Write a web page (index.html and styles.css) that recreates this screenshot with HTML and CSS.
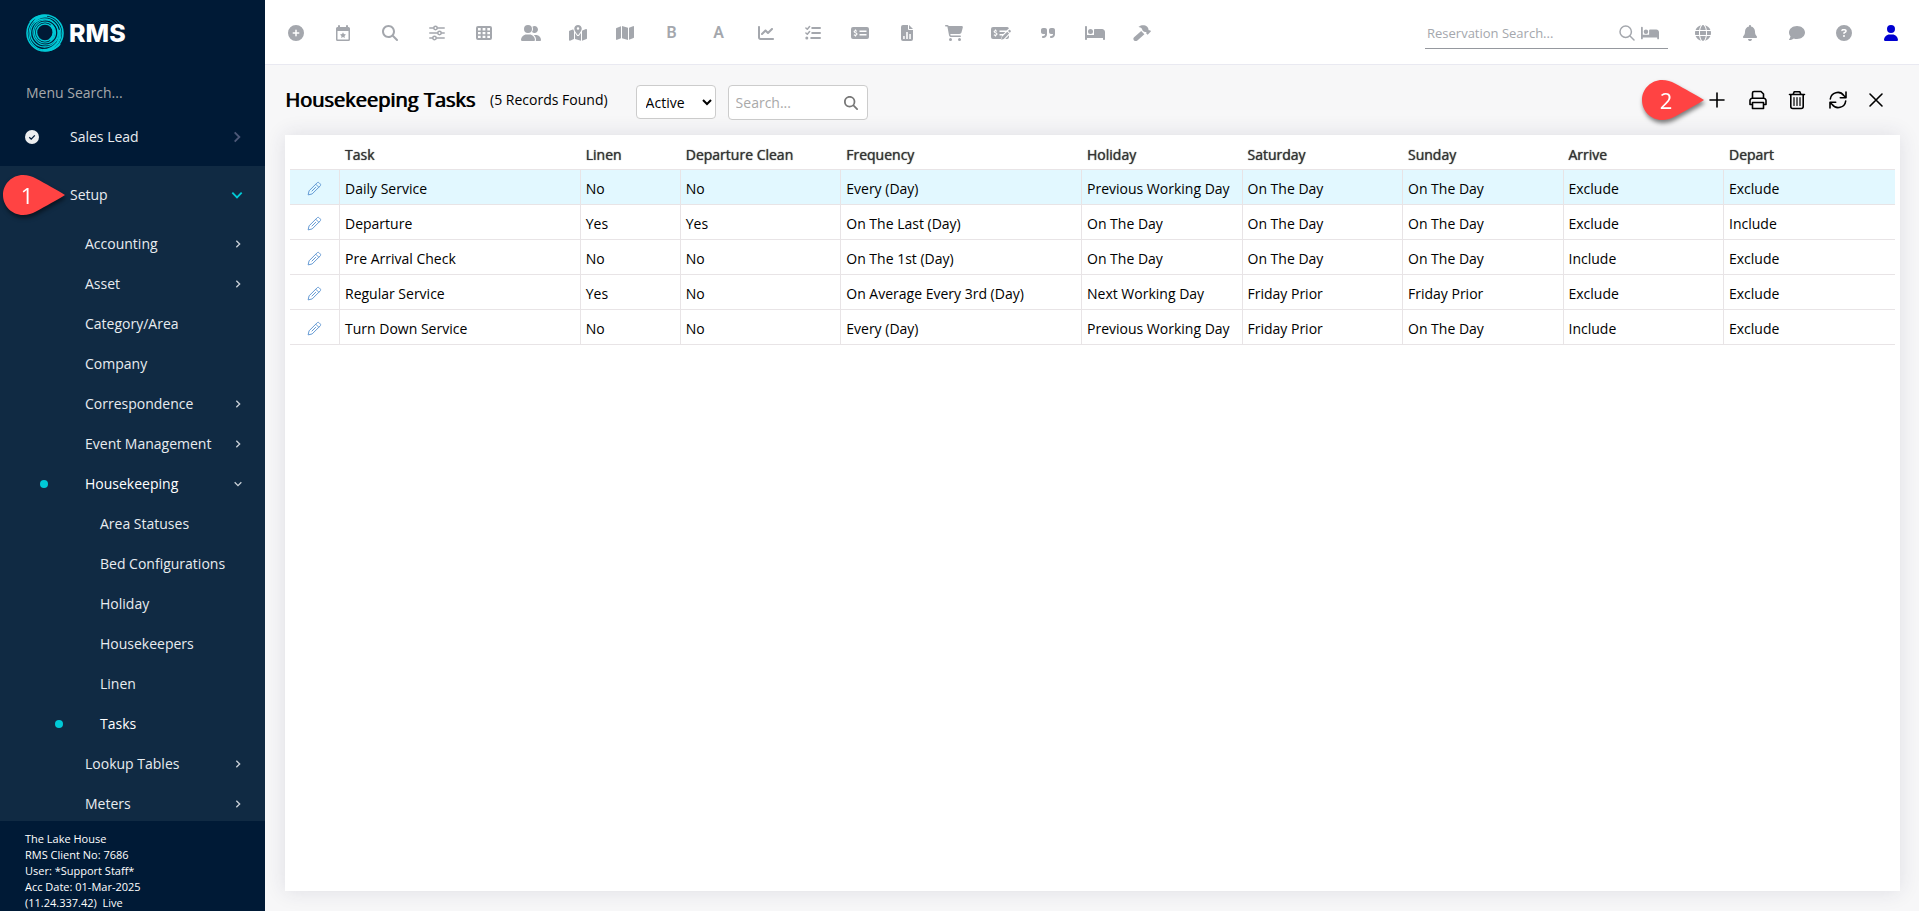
FILE: index.html
```html
<!DOCTYPE html>
<html lang="en">
<head>
<meta charset="utf-8">
<meta name="viewport" content="width=device-width, initial-scale=1">
<title>Housekeeping Tasks</title>
<link rel="stylesheet" href="styles.css">
</head>
<body>
<svg class="defs" aria-hidden="true">
  <symbol id="i-chevron" viewBox="0 0 12 12"><path d="M4 2l4 4-4 4" fill="none" stroke="currentColor" stroke-width="1.6"/></symbol>
  <symbol id="i-pencil" viewBox="0 0 16 16"><path d="M1.200 14.800l1-4.300L10.800 1.900c.6-.6 1.500-.6 2.100 0l1.200 1.200c.6.6.6 1.500 0 2.100L5.500 13.800zM9.300 3.400l3.300 3.300M5 11l4.500-4.500" fill="none" stroke="currentColor"/></symbol>
  <symbol id="i-search" viewBox="0 0 512 512"><path d="M416 208c0 45.900-14.900 88.300-40 122.700L502.600 457.400c12.500 12.500 12.500 32.800 0 45.300s-32.800 12.500-45.300 0L330.700 376c-34.400 25.200-76.800 40-122.700 40C93.100 416 0 322.900 0 208S93.100 0 208 0S416 93.100 416 208zM208 352a144 144 0 1 0 0-288 144 144 0 1 0 0 288z"/></symbol>
  <symbol id="i-bed" viewBox="0 0 640 512"><path d="M32 32c17.700 0 32 14.300 32 32V320H288V160c0-17.700 14.300-32 32-32H544c53 0 96 43 96 96V448c0 17.700-14.300 32-32 32s-32-14.300-32-32V416H64v32c0 17.700-14.300 32-32 32s-32-14.300-32-32V64C0 46.300 14.300 32 32 32zm144 96a80 80 0 1 1 0 160 80 80 0 1 1 0-160z"/></symbol>
  <symbol id="i-callout" viewBox="0 0 62 40"><path d="M20 0C9 0 0 9 0 20s9 20 20 20c5 0 9-1.500 13-3.500C43 31 54 25 62 20 54 15 43 9 33 3.500 29 1.500 25 0 20 0z"/></symbol>
</svg>
<div class="app">
  <aside class="sidebar">
    <a class="logo" href="#" aria-label="RMS home">
      <svg class="logo-mark" viewBox="0 0 38 38" fill="none" stroke="#00c9d6" aria-hidden="true">
        <circle cx="19" cy="19" r="18" stroke-width="1.600"/>
        <ellipse cx="19" cy="19.500" rx="16" ry="16.500" stroke-width="1.200"/>
        <circle cx="18.500" cy="19" r="14" stroke-width="1.300"/>
        <circle cx="19.500" cy="18.500" r="12.500" stroke-width="1.200"/>
        <circle cx="19" cy="18.500" r="10.500" stroke-width="1.200"/>
        <circle cx="19" cy="18.500" r="8.500" stroke-width="1.500"/>
        <path d="M4 8C8 3 14 1 21 2c-6 0-10 2-13 6M34 30c-4 5-10 7-17 6 6 0 10-2 14-7 3-4 3-9 2-13" stroke-width="2"/>
        <path d="M25 11c4 4 4 11-1 15" stroke-width="2.500"/>
      </svg>
      <span class="logo-text">RMS</span>
    </a>
    <input class="menu-search" type="text" placeholder="Menu Search..." aria-label="Menu search">
    <nav class="menu" aria-label="Main menu">
      <a class="menu-top" href="#">
        <svg class="menu-icon" viewBox="0 0 14 14" aria-hidden="true"><circle cx="7" cy="7" r="7" fill="#eceef0"/><path d="M4.300 7.200l1.900 1.900 3.600-3.700" fill="none" stroke="#001a36" stroke-width="1.300"/></svg>
        <span>Sales Lead</span><svg class="chev dim" aria-hidden="true"><use href="#i-chevron"/></svg>
      </a>
      <div class="menu-section">
        <a class="menu-top setup" href="#"><span>Setup</span><svg class="chev open cyan" aria-hidden="true"><use href="#i-chevron"/></svg>
          <span class="callout callout-one"><svg class="callout-shape" aria-hidden="true"><use href="#i-callout"/></svg><span class="callout-number">1</span></span>
        </a>
        <a class="item" href="#"><span>Accounting</span><svg class="chev small" aria-hidden="true"><use href="#i-chevron"/></svg></a>
        <a class="item" href="#"><span>Asset</span><svg class="chev small" aria-hidden="true"><use href="#i-chevron"/></svg></a>
        <a class="item" href="#"><span>Category/Area</span></a>
        <a class="item" href="#"><span>Company</span></a>
        <a class="item" href="#"><span>Correspondence</span><svg class="chev small" aria-hidden="true"><use href="#i-chevron"/></svg></a>
        <a class="item" href="#"><span>Event Management</span><svg class="chev small" aria-hidden="true"><use href="#i-chevron"/></svg></a>
        <a class="item current" href="#"><span>Housekeeping</span><svg class="chev small open" aria-hidden="true"><use href="#i-chevron"/></svg></a>
        <a class="item sub" href="#"><span>Area Statuses</span></a>
        <a class="item sub" href="#"><span>Bed Configurations</span></a>
        <a class="item sub" href="#"><span>Holiday</span></a>
        <a class="item sub" href="#"><span>Housekeepers</span></a>
        <a class="item sub" href="#"><span>Linen</span></a>
        <a class="item sub current" href="#"><span>Tasks</span></a>
        <a class="item" href="#"><span>Lookup Tables</span><svg class="chev small" aria-hidden="true"><use href="#i-chevron"/></svg></a>
        <a class="item" href="#"><span>Meters</span><svg class="chev small" aria-hidden="true"><use href="#i-chevron"/></svg></a>
      </div>
    </nav>
    <footer class="client">
      <div>The Lake House</div>
      <div>RMS Client No: 7686</div>
      <div>User: *Support Staff*</div>
      <div>Acc Date: 01-Mar-2025</div>
      <div>(11.24.337.42)&nbsp; Live</div>
    </footer>
  </aside>

  <div class="page">
    <header class="topbar">
      <div class="shortcuts">
        <button class="icon-btn" aria-label="Add"><svg viewBox="0 0 512 512"><path d="M256 512A256 256 0 1 0 256 0a256 256 0 1 0 0 512zM232 344V280H168c-13.300 0-24-10.700-24-24s10.700-24 24-24h64V168c0-13.300 10.700-24 24-24s24 10.700 24 24v64h64c13.300 0 24 10.700 24 24s-10.700 24-24 24H280v64c0 13.300-10.700 24-24 24s-24-10.700-24-24z"/></svg></button>
        <button class="icon-btn" aria-label="Events"><svg viewBox="0 0 16 16"><path fill-rule="evenodd" d="M4 0a1 1 0 0 1 1 1v1h6V1a1 1 0 0 1 2 0v1h.5A1.500 1.500 0 0 1 15 3.500v11a1.500 1.500 0 0 1-1.500 1.500h-11A1.500 1.500 0 0 1 1 14.500v-11A1.500 1.500 0 0 1 2.500 2H3V1a1 1 0 0 1 1-1zM2.500 6v8.500h11V6zM8 7.200l.9 1.900 2.100.3-1.500 1.500.3 2.100L8 12l-1.800 1 .3-2.100L5 9.400l2.100-.3z"/></svg></button>
        <button class="icon-btn" aria-label="Search"><svg><use href="#i-search"/></svg></button>
        <button class="icon-btn" aria-label="Filters"><svg viewBox="0 0 16 16" fill="none" stroke="currentColor" stroke-width="1.500" stroke-linecap="round"><path d="M.8 3h3.700M8.500 3h6.700M.8 8h7.700M12.500 8h2.700M.8 13h2.700M7.500 13h7.700"/><circle cx="6.500" cy="3" r="1.700"/><circle cx="10.500" cy="8" r="1.700"/><circle cx="5.500" cy="13" r="1.700"/></svg></button>
        <button class="icon-btn" aria-label="Grid"><svg viewBox="0 0 16 16"><path fill-rule="evenodd" d="M2 1h12a2 2 0 0 1 2 2v10a2 2 0 0 1-2 2H2a2 2 0 0 1-2-2V3a2 2 0 0 1 2-2zM2 3v2.500h2.700V3zM6.600 3v2.500h2.800V3zM11.300 3v2.500H14V3zM2 7v2.300h2.700V7zM6.600 7v2.300h2.800V7zM11.300 7v2.300H14V7zM2 10.800V13h2.700v-2.200zM6.600 10.800V13h2.800v-2.200zM11.300 10.800V13H14v-2.200z"/></svg></button>
        <button class="icon-btn" aria-label="Guests"><svg class="wide" viewBox="0 0 640 512"><path d="M96 128a128 128 0 1 1 256 0A128 128 0 1 1 96 128zM0 482.300C0 383.800 79.800 304 178.300 304h91.400C368.200 304 448 383.800 448 482.300c0 16.400-13.300 29.700-29.700 29.700H29.700C13.300 512 0 498.700 0 482.300zM609.300 512H471.400c5.400-9.400 8.600-20.300 8.600-32v-8c0-60.700-27.100-115.200-69.800-151.800c2.400-.1 4.700-.2 7.100-.2h61.400C567.800 320 640 392.200 640 481.300c0 17-13.800 30.700-30.700 30.700zM432 256c-31 0-59-12.600-79.300-32.900C372.400 196.500 384 163.600 384 128c0-26.800-6.600-52.100-18.300-74.300C384.300 40.100 407.200 32 432 32c61.900 0 112 50.100 112 112s-50.100 112-112 112z"/></svg></button>
        <button class="icon-btn" aria-label="Site map"><svg class="mid" viewBox="0 0 576 512"><path d="M408 120c0 54.600-73.100 151.900-105.200 192c-7.700 9.600-22 9.600-29.600 0C241.100 271.900 168 174.600 168 120C168 53.700 221.700 0 288 0s120 53.700 120 120zm8 80.400c3.500-6.900 6.700-13.800 9.600-20.600c.5-1.200 1-2.500 1.500-3.700l116-46.400C558.900 123.400 576 135 576 152V422.800c0 9.800-6 18.600-15.100 22.300L416 503V200.400zM137.600 138.300c2.400 14.100 7.200 28.300 12.800 41.500c2.900 6.800 6.100 13.700 9.600 20.600V451.800L32.900 502.700C17.100 509 0 497.400 0 480.400V209.600c0-9.800 6-18.600 15.100-22.300l122.600-49zM327.800 332c13.900-17.400 35.700-45.700 56.200-77V504.300L192 449.400V255c20.500 31.300 42.300 59.600 56.200 77c20.500 25.600 59.100 25.600 79.600 0zM288 152a40 40 0 1 0 0-80 40 40 0 1 0 0 80z"/></svg></button>
        <button class="icon-btn" aria-label="Map"><svg class="mid" viewBox="0 0 576 512"><path d="M384 476.100L192 421.200V35.900L384 90.800V476.100zm32-1.200V88.400L543.100 37.500c15.800-6.300 32.900 5.300 32.900 22.300V394.600c0 9.800-6 18.600-15.100 22.300L416 474.800zM15.100 95.100L160 37.200V423.600L32.900 474.500C17.100 480.800 0 469.200 0 452.200V117.400c0-9.800 6-18.600 15.100-22.300z"/></svg></button>
        <button class="icon-btn letter">B</button>
        <button class="icon-btn letter">A</button>
        <button class="icon-btn" aria-label="Charts"><svg viewBox="0 0 512 512"><path d="M64 64c0-17.700-14.300-32-32-32S0 46.300 0 64V400c0 44.200 35.800 80 80 80H480c17.700 0 32-14.300 32-32s-14.300-32-32-32H80c-8.800 0-16-7.200-16-16V64zm406.600 86.600c12.500-12.500 12.500-32.800 0-45.300s-32.800-12.500-45.300 0L320 210.700l-57.400-57.400c-12.500-12.500-32.800-12.500-45.300 0l-112 112c-12.500 12.500-12.500 32.800 0 45.300s32.800 12.500 45.300 0L240 221.300l57.400 57.400c12.500 12.500 32.800 12.500 45.300 0l128-128z"/></svg></button>
        <button class="icon-btn" aria-label="Checklist"><svg viewBox="0 0 16 16" fill="none" stroke="currentColor" stroke-linecap="round" stroke-linejoin="round"><path d="M.9 3l1.400 1.300L4.600 1.500M.9 8l1.400 1.300L4.600 6.500" stroke-width="1.500"/><path d="M7.200 3H15M7.200 8H15M6.200 13H15" stroke-width="2"/><circle cx="1.800" cy="13" r="1.500" fill="currentColor" stroke="none"/></svg></button>
        <button class="icon-btn" aria-label="Payments"><svg class="mid" viewBox="0 0 18 16"><path fill-rule="evenodd" d="M2 2h14a2 2 0 0 1 2 2v8a2 2 0 0 1-2 2H2a2 2 0 0 1-2-2V4a2 2 0 0 1 2-2zM8.500 5.500V7h7V5.500zM8.500 9v1.500h7V9z"/><path d="M6 6.300C4.800 5.500 3 5.700 3.100 6.800c.1 1.200 2.900.8 2.900 2.300 0 1.200-1.900 1.400-3.100.6M4.500 4.500v1M4.500 10.300v1.200" fill="none" stroke="#fff" stroke-width="1.100"/></svg></button>
        <button class="icon-btn" aria-label="Reports"><svg viewBox="0 0 16 16"><path fill-rule="evenodd" d="M4 0h5v4a1 1 0 0 0 1 1h4v9a2 2 0 0 1-2 2H4a2 2 0 0 1-2-2V2a2 2 0 0 1 2-2zM10 0l4 4h-4zM4.200 11v3h1.500v-3zM7.200 7v7h1.600V7zM10.300 9v5h1.500V9z"/></svg></button>
        <button class="icon-btn" aria-label="Sales"><svg class="mid" viewBox="0 0 576 512"><path d="M0 24C0 10.700 10.700 0 24 0H69.500c22 0 41.500 12.800 50.600 32h411c26.300 0 45.500 25 38.600 50.400l-41 152.300c-8.500 31.400-37 53.300-69.500 53.300H170.700l5.400 28.500c2.200 11.300 12.100 19.500 23.600 19.500H488c13.300 0 24 10.700 24 24s-10.700 24-24 24H199.700c-34.600 0-64.300-24.600-70.700-58.500L77.400 54.500c-.7-3.800-4-6.500-7.900-6.500H24C10.700 48 0 37.300 0 24zM128 464a48 48 0 1 1 96 0 48 48 0 1 1 -96 0zm336-48a48 48 0 1 1 0 96 48 48 0 1 1 0-96z"/></svg></button>
        <button class="icon-btn" aria-label="Cheques"><svg class="wide" viewBox="0 0 20 16"><path fill-rule="evenodd" d="M2 2h14a2 2 0 0 1 1.900 1.400L15.500 5.500h-7V7h5.800l-2 2H8.500v1.500h2.600L10 14H2a2 2 0 0 1-2-2V4a2 2 0 0 1 2-2z"/><path d="M17 5.900l1-.9c.7-.7 2.500 1 1.700 1.800l-.9 1zM16.200 6.700l1.900 1.900-5.300 5.300-2.600.9.700-2.800zM18 10.200V12a2 2 0 0 1-2 2h-1.700z"/><path d="M6 6.300C4.800 5.500 3 5.700 3.100 6.800c.1 1.200 2.900.8 2.900 2.300 0 1.200-1.900 1.400-3.100.6M4.500 4.500v1M4.500 10.300v1.200" fill="none" stroke="#fff" stroke-width="1.100"/></svg></button>
        <button class="icon-btn" aria-label="Quotes"><svg viewBox="0 0 448 512"><path d="M448 296c0 66.300-53.700 120-120 120h-8c-17.700 0-32-14.300-32-32s14.300-32 32-32h8c30.900 0 56-25.100 56-56v-8H320c-35.300 0-64-28.700-64-64V160c0-35.300 28.700-64 64-64h64c35.300 0 64 28.700 64 64v136zm-256 0c0 66.300-53.700 120-120 120H64c-17.700 0-32-14.300-32-32s14.300-32 32-32h8c30.900 0 56-25.100 56-56v-8H64c-35.300 0-64-28.700-64-64V160c0-35.300 28.700-64 64-64h64c35.300 0 64 28.700 64 64v136z"/></svg></button>
        <button class="icon-btn" aria-label="Housekeeping"><svg class="wide"><use href="#i-bed"/></svg></button>
        <button class="icon-btn" aria-label="Maintenance"><svg class="mid" viewBox="0 0 18 16"><path d="M5.500 1.800C7.300.3 9.300 0 11.300.2c2.200.3 4.200 2 4.200 4.200v.6l.8.5.6-.5 1.100 1.200-3.300 3.600-1.500-1.400.4-.7-.7-.7c-1.100.2-2-.1-2.800-.9C9.300 5 9.200 3.900 8.700 3.400 7.800 2.500 6.700 2.500 5.500 1.800zM8.200 6l3.200 3.200-7 6.300c-1 .9-2.500.8-3.400-.1s-.9-2.300.1-3.200z"/></svg></button>
      </div>
      <div class="res-search">
        <input type="text" placeholder="Reservation Search..." aria-label="Reservation search">
        <svg class="res-glass" viewBox="0 0 16 16" fill="none" stroke="currentColor" stroke-width="1.500" stroke-linecap="round" aria-hidden="true"><circle cx="6.700" cy="6.700" r="5.700"/><path d="M11 11l4 4"/></svg>
        <svg aria-hidden="true"><use href="#i-bed"/></svg>
      </div>
      <div class="account">
        <button class="icon-btn" aria-label="Language"><svg viewBox="0 0 512 512"><path d="M352 256c0 22.200-1.200 43.600-3.300 64H163.300c-2.200-20.400-3.300-41.800-3.300-64s1.200-43.600 3.300-64H348.700c2.200 20.400 3.300 41.800 3.300 64zm28.800-64H503.900c5.300 20.500 8.100 41.900 8.100 64s-2.800 43.500-8.100 64H380.800c2.100-20.600 3.200-42 3.200-64s-1.100-43.400-3.200-64zm112.600-32H376.700c-10-63.900-29.800-117.400-55.300-151.600c78.300 20.700 142 77.500 171.900 151.600zm-149.100 0H167.700c6.100-36.400 15.500-68.600 27-94.700c10.500-23.600 22.200-40.700 33.500-51.500C239.400 3.200 248.700 0 256 0s16.600 3.200 27.800 13.800c11.300 10.800 23 27.900 33.500 51.500c11.600 26 20.900 58.200 27 94.700zm-209 0H18.600C48.600 85.900 112.200 29.100 190.600 8.400C165.100 42.600 145.300 96.100 135.300 160zM8.100 192H131.200c-2.100 20.600-3.200 42-3.200 64s1.100 43.400 3.200 64H8.100C2.800 299.500 0 278.100 0 256s2.800-43.500 8.100-64zM194.700 446.600c-11.600-26-20.900-58.200-27-94.600H344.300c-6.100 36.400-15.500 68.600-27 94.600c-10.500 23.600-22.200 40.700-33.500 51.500C272.600 508.800 263.300 512 256 512s-16.600-3.200-27.800-13.800c-11.300-10.800-23-27.900-33.500-51.500zM135.300 352c10 63.900 29.800 117.400 55.300 151.600C112.200 482.900 48.600 426.100 18.600 352H135.300zm358.100 0c-30 74.100-93.600 130.900-171.900 151.600c25.500-34.200 45.200-87.700 55.300-151.600H493.400z"/></svg></button>
        <button class="icon-btn" aria-label="Notifications"><svg viewBox="0 0 448 512"><path d="M224 0c-17.700 0-32 14.300-32 32V51.200C119 66 64 130.600 64 208v18.800c0 47-17.300 92.400-48.500 127.600l-7.400 8.300c-8.400 9.400-10.400 22.900-5.300 34.400S19.400 416 32 416H416c12.600 0 24-7.400 29.200-18.900s3.100-25-5.300-34.400l-7.400-8.300C401.300 319.200 384 273.900 384 226.800V208c0-77.400-55-142-128-156.800V32c0-17.700-14.300-32-32-32zm45.300 493.300c12-12 18.700-28.300 18.700-45.300H160c0 17 6.700 33.300 18.700 45.300s28.300 18.700 45.300 18.700s33.300-6.700 45.300-18.700z"/></svg></button>
        <button class="icon-btn" aria-label="Messages"><svg viewBox="0 0 512 512"><path d="M512 240c0 114.900-114.600 208-256 208c-37.100 0-72.300-6.400-104.100-17.900c-11.900 8.700-31.300 20.600-54.300 30.600C73.600 471.100 44.700 480 16 480c-6.500 0-12.300-3.900-14.800-9.900c-2.500-6-1.100-12.800 3.400-17.400l.3-.3c.3-.3 .7-.7 1.300-1.400c1.100-1.200 2.800-3.100 4.900-5.700c4.100-5 9.600-12.400 15.200-21.600c10-16.600 19.500-38.400 21.400-62.900C17.700 326.800 0 285.100 0 240C0 125.100 114.600 32 256 32s256 93.100 256 208z"/></svg></button>
        <button class="icon-btn" aria-label="Help"><svg viewBox="0 0 512 512"><path d="M256 512A256 256 0 1 0 256 0a256 256 0 1 0 0 512zM169.800 165.300c7.900-22.300 29.100-37.300 52.800-37.300h58.300c34.900 0 63.100 28.300 63.100 63.100c0 22.600-12.100 43.500-31.700 54.800L280 264.400c-.2 13-10.900 23.600-24 23.600c-13.300 0-24-10.700-24-24V250.500c0-8.600 4.600-16.500 12.100-20.800l44.300-25.400c4.700-2.700 7.600-7.700 7.600-13.100c0-8.400-6.800-15.100-15.100-15.100H222.600c-3.400 0-6.400 2.100-7.500 5.300l-.4 1.200c-4.400 12.500-18.200 19-30.600 14.600s-19-18.200-14.600-30.600l.4-1.200zM224 352a32 32 0 1 1 64 0 32 32 0 1 1 -64 0z"/></svg></button>
        <button class="icon-btn user" aria-label="Account"><svg viewBox="0 0 448 512"><path d="M224 256A128 128 0 1 0 224 0a128 128 0 1 0 0 256zm-45.700 48C79.800 304 0 383.800 0 482.300C0 498.700 13.300 512 29.700 512H418.300c16.400 0 29.700-13.300 29.700-29.700C448 383.800 368.200 304 269.700 304H178.300z"/></svg></button>
      </div>
    </header>

    <main class="content">
      <div class="heading">
        <h1>Housekeeping Tasks</h1>
        <span class="count">(5 Records Found)</span>
        <select class="status" aria-label="Status"><option>Active</option><option>Inactive</option></select>
        <div class="find"><input type="text" placeholder="Search..." aria-label="Search tasks"><svg aria-hidden="true"><use href="#i-search"/></svg></div>
        <div class="tools">
          <span class="callout callout-two"><svg class="callout-shape" aria-hidden="true"><use href="#i-callout"/></svg><span class="callout-number">2</span></span>
          <button class="tool t-add" aria-label="Add"><svg viewBox="0 0 20 20"><path d="M10 3v14M3 10h14"/></svg></button>
          <button class="tool t-print" aria-label="Print"><svg viewBox="0 0 20 20"><path d="M4.500 8V3A1.500 1.500 0 0 1 6 1.500h7L15.500 4v4M4.500 14.500H2v-4A2.200 2.200 0 0 1 4.200 8.300h11.600A2.200 2.200 0 0 1 18 10.500v4h-2.500M4.500 12.500h11v6h-11z"/></svg></button>
          <button class="tool t-delete" aria-label="Delete"><svg viewBox="0 0 20 20"><path d="M2.500 4.500h15M6 4.500l1.300-2.800h5.400L14 4.500M3.800 4.500v12a2 2 0 0 0 2 2h8.400a2 2 0 0 0 2-2v-12"/><path d="M7 7.500v8M10 7.500v8M13 7.500v8" stroke-width="1.200"/></svg></button>
          <button class="tool t-refresh" aria-label="Refresh"><svg viewBox="0 0 20 20"><path d="M2.300 9A7.500 7.500 0 0 1 15.800 5.500L17.700 7.500M18 2v5.700h-5.700M17.700 11A7.500 7.500 0 0 1 4.200 14.500L2.300 12.500M2 18v-5.700h5.700"/></svg></button>
          <button class="tool t-close" aria-label="Close"><svg viewBox="0 0 20 20"><path d="M4 4l12 12M16 4L4 16"/></svg></button>
        </div>
      </div>

      <section class="card">
        <table class="tasks">
          <colgroup><col class="c-edit"><col class="c-wide"><col class="c-small"><col class="c-mid"><col class="c-wide"><col class="c-mid"><col class="c-mid"><col class="c-mid"><col class="c-mid"><col></colgroup>
          <thead><tr><th aria-label="Edit"></th><th>Task</th><th>Linen</th><th>Departure Clean</th><th>Frequency</th><th>Holiday</th><th>Saturday</th><th>Sunday</th><th>Arrive</th><th>Depart</th></tr></thead>
          <tbody>
            <tr class="selected"><td><button class="edit" aria-label="Edit Daily Service"><svg><use href="#i-pencil"/></svg></button></td><td>Daily Service</td><td>No</td><td>No</td><td>Every (Day)</td><td>Previous Working Day</td><td>On The Day</td><td>On The Day</td><td>Exclude</td><td>Exclude</td></tr>
            <tr><td><button class="edit" aria-label="Edit Departure"><svg><use href="#i-pencil"/></svg></button></td><td>Departure</td><td>Yes</td><td>Yes</td><td>On The Last (Day)</td><td>On The Day</td><td>On The Day</td><td>On The Day</td><td>Exclude</td><td>Include</td></tr>
            <tr><td><button class="edit" aria-label="Edit Pre Arrival Check"><svg><use href="#i-pencil"/></svg></button></td><td>Pre Arrival Check</td><td>No</td><td>No</td><td>On The 1st (Day)</td><td>On The Day</td><td>On The Day</td><td>On The Day</td><td>Include</td><td>Exclude</td></tr>
            <tr><td><button class="edit" aria-label="Edit Regular Service"><svg><use href="#i-pencil"/></svg></button></td><td>Regular Service</td><td>Yes</td><td>No</td><td>On Average Every 3rd (Day)</td><td>Next Working Day</td><td>Friday Prior</td><td>Friday Prior</td><td>Exclude</td><td>Exclude</td></tr>
            <tr><td><button class="edit" aria-label="Edit Turn Down Service"><svg><use href="#i-pencil"/></svg></button></td><td>Turn Down Service</td><td>No</td><td>No</td><td>Every (Day)</td><td>Previous Working Day</td><td>Friday Prior</td><td>On The Day</td><td>Include</td><td>Exclude</td></tr>
          </tbody>
        </table>
      </section>
    </main>
  </div>
</div>
</body>
</html>
```

FILE: styles.css
```css
* { box-sizing: border-box; }

body {
  margin: 0;
  font: 14px/20px "Open Sans", "Noto Sans", sans-serif;
  color: #000;
  background: #f7f7f8;
}

a { color: inherit; text-decoration: none; }
button { padding: 0; border: 0; background: none; color: inherit; cursor: pointer; }
input, select { font: inherit; }
svg { display: block; }
svg:not([fill]) { fill: currentColor; }
.defs { position: absolute; width: 0; height: 0; }

.app { display: flex; height: 100vh; }

/* Sidebar */
.sidebar {
  display: flex;
  flex-direction: column;
  flex: none;
  width: 265px;
  color: #e8ecf0;
  background: #001a36;
}
.logo { display: flex; align-items: center; gap: 5px; height: 66px; padding-left: 26px; }
.logo-mark { width: 38px; height: 38px; }
.logo-text { font: 800 25px/38px Inter, sans-serif; color: #fff; }
.menu-search {
  height: 52px;
  padding: 0 26px;
  border: 0;
  outline: 0;
  background: none;
  color: #fff;
}
.menu-search::placeholder { color: #a6a8ab; opacity: 1; }
.menu { display: flex; flex-direction: column; flex: 1; min-height: 0; }
.menu-top {
  position: relative;
  display: flex;
  align-items: center;
  flex: none;
  height: 38px;
  margin-bottom: 10px;
  padding: 0 21px 0 25px;
}
.menu-icon { width: 14px; height: 14px; margin-right: 31px; }
.menu-section { flex: 1; min-height: 0; overflow: hidden; background: #102a43; }
.setup { height: 58px; margin: 0; padding-left: 70px; }
.chev { width: 14px; height: 14px; margin-left: auto; }
.chev.small { width: 10px; height: 10px; color: #c9d0d7; }
.chev.open { transform: rotate(90deg); }
.chev.dim { color: #4c5878; }
.chev.cyan { color: #00c9d6; }
.item {
  display: flex;
  align-items: center;
  height: 40px;
  padding: 0 22px 0 85px;
}
.item.sub { padding-left: 100px; }
.item.current { padding-left: 40px; color: #fff; }
.item.sub.current { padding-left: 55px; }
.item.current::before {
  content: "";
  width: 8px;
  height: 8px;
  margin-right: 37px;
  border-radius: 50%;
  background: #00c9d6;
}
.client { flex: none; height: 90px; padding: 10px 25px 0; font-size: 11px; line-height: 16px; color: #fff; }

/* Numbered markers drawn over the page */
.callout {
  position: absolute;
  z-index: 2;
  width: 62px;
  height: 40px;
  color: #ff4343;
  filter: drop-shadow(1px 3px 2px rgba(0, 0, 0, 0.5));
}
.callout-one { left: 3px; top: 9px; }
.callout-two { right: 100%; top: -5px; margin-right: 2px; }
.callout-shape { width: 62px; height: 40px; }
.callout-number {
  position: absolute;
  inset: 0 14px 0 0;
  font-size: 22px;
  line-height: 40px;
  text-align: center;
  color: #fff;
}

/* Top bar */
.page { display: flex; flex-direction: column; flex: 1; min-width: 0; }
.topbar {
  display: flex;
  align-items: center;
  flex: none;
  height: 65px;
  padding: 2px 5px 0 0;
  border-bottom: 1px solid #e9e9f1;
  background: #fff;
  color: #a4a7ad;
}
.shortcuts { display: flex; padding-left: 7px; }
.account { display: flex; margin-left: 11px; }
.icon-btn { display: flex; align-items: center; justify-content: center; width: 47px; height: 40px; }
.icon-btn svg { width: 16px; height: 16px; }
.icon-btn .wide { width: 20px; }
.icon-btn .mid { width: 18px; }
.icon-btn.letter { font: 600 16px/20px Roboto, sans-serif; }
.icon-btn.user { color: #0000d0; }
.res-search {
  display: flex;
  align-items: center;
  gap: 6px;
  width: 243px;
  height: 32px;
  margin-left: auto;
  padding: 0 9px 0 2px;
  border-bottom: 1px solid #95989e;
}
.res-search input { flex: 1; min-width: 0; padding: 0; border: 0; outline: 0; font-size: 13px; }
.res-search input::placeholder { color: #a4a7ad; opacity: 1; }
.res-search svg { width: 18px; height: 16px; }
.res-search .res-glass { width: 16px; }

/* Content */
.content { display: flex; flex-direction: column; flex: 1; min-height: 0; padding: 20px 19px 20px 20px; }
.heading { display: flex; align-items: flex-start; flex: none; height: 35px; margin-bottom: 15px; line-height: 30px; }
h1 { margin: 0 15px 0 0; font-size: 20px; line-height: 30px; font-weight: 400; text-shadow: 1px 0 0 #000; }
.count { margin-right: 28px; }
.status {
  width: 80px;
  height: 34px;
  margin-right: 12px;
  padding: 0 0 0 5px;
  border: 1px solid #ccc;
  border-radius: 4px;
  background: #fff;
}
.find {
  display: flex;
  align-items: center;
  width: 140px;
  height: 35px;
  padding: 0 9px 0 7px;
  border: 1px solid #ccc;
  border-radius: 4px;
  background: #fff;
  color: #777;
}
.find input { flex: 1; min-width: 0; padding: 0; border: 0; outline: 0; }
.find input::placeholder { color: #a9a9a9; opacity: 1; }
.find svg { width: 14px; height: 14px; }
.tools { position: relative; display: flex; align-items: center; gap: 20px; height: 30px; margin: 0 18px 0 auto; }
.tool { display: flex; justify-content: center; height: 20px; }
.tool svg { flex: none; width: 20px; height: 20px; fill: none; stroke: #000; stroke-width: 1.600; stroke-linecap: round; stroke-linejoin: round; }
.t-add { width: 22px; }
.t-print { width: 20px; }
.t-delete { width: 18px; }
.t-refresh { width: 24px; }
.t-close { width: 12px; }

.card {
  flex: 1;
  min-height: 0;
  padding: 0 5px;
  background: #fff;
  box-shadow: 0 0 20px rgba(40, 45, 80, 0.12);
}
.tasks { width: 100%; border-collapse: separate; border-spacing: 0; table-layout: fixed; }
.c-edit { width: 49px; }
.c-wide { width: 15%; }
.c-small { width: 100px; }
.c-mid { width: 10%; }
.tasks th {
  height: 35px;
  padding: 5px 5px 0 6px;
  border-bottom: 1px solid #e8e4e6;
  font-weight: 400;
  text-align: left;
  color: #333;
  text-shadow: 0 0 1px #333;
}
.tasks td { height: 35px; padding: 3px 5px 0; border-bottom: 1px solid #e8e4e6; white-space: nowrap; }
.tasks td + td { border-left: 1px solid #e8e4e6; }
.selected { background: #e2f8ff; }
.edit { display: block; margin: 0 auto; color: #5b93d0; }
.edit svg { width: 15px; height: 15px; }
```
